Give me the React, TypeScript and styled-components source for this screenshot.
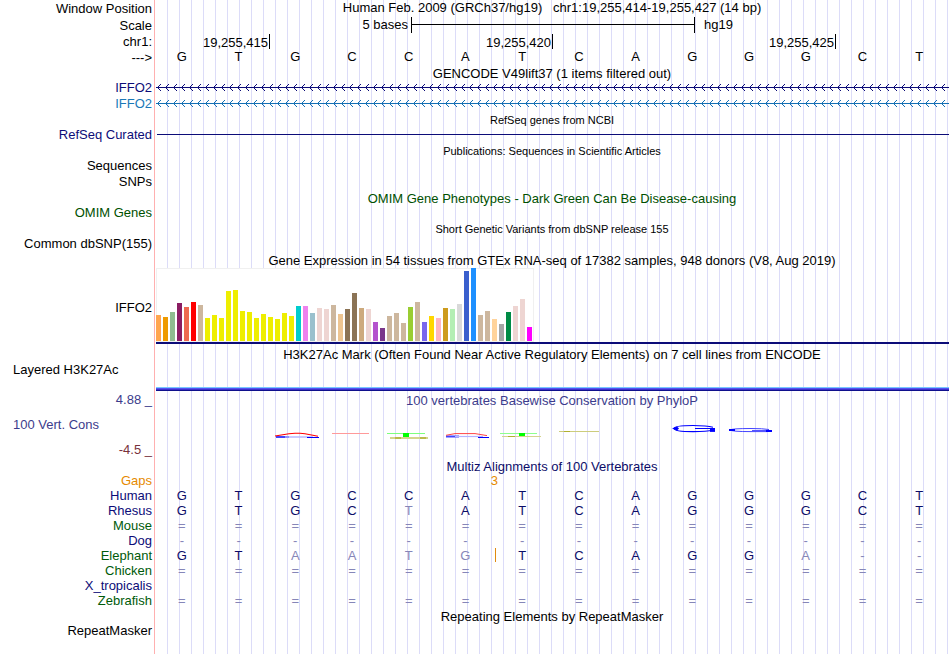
import React from "react";
import styled, { createGlobalStyle } from "styled-components";

const GlobalStyle = createGlobalStyle`
  *, *::before, *::after { box-sizing: border-box; }
  body { margin: 0; background: #fff; }
`;

const LABEL = "155px";

const Page = styled.main`
  display: flex;
  flex-direction: column;
  min-height: 100vh;
  padding-right: 1px;
  color: #000;
  font: 13px/15px "Liberation Sans", Arial, sans-serif;
  background:
    linear-gradient(#ffb0b0 0 0) 154px 0 / 1px 100% no-repeat,
    linear-gradient(#fff 0 0) 0 0 / 156px 100% no-repeat,
    linear-gradient(to right, transparent 11px, #dcdcf8 11px) 156px 0 / 12px 100% repeat-x;
`;

const Row = styled.section<{ $h: number }>`
  display: grid;
  grid-template-columns: ${LABEL} minmax(0, 1fr);
  min-height: ${(p) => p.$h}px;
  line-height: ${(p) => Math.min(p.$h, 16)}px;
`;

const Label = styled.div<{ $color?: string }>`
  padding-right: 3px;
  align-self: center;
  text-align: right;
  white-space: nowrap;
  color: ${(p) => p.$color || "inherit"};
`;

const Title = styled.h2<{ $color?: string; $small?: boolean }>`
  margin: 0 0 -1px;
  align-self: end;
  text-align: center;
  white-space: pre;
  font-weight: 400;
  font-size: ${(p) => (p.$small ? 11 : 13)}px;
  color: ${(p) => p.$color || "inherit"};
`;

const PositionTitle = styled(Title).attrs({ as: "h1" })`
  margin: 0;
  align-self: start;
  line-height: 15px;
`;

const ScaleRuler = styled.div`
  display: grid;
  grid-template-columns: 256fr 284fr 254fr;
  line-height: 15px;
`;

const ScaleText = styled.span<{ $right?: boolean }>`
  padding: 0 3px 0 9px;
  text-align: ${(p) => (p.$right ? "right" : "left")};
`;

const ScaleBar = styled.span`
  height: 16px;
  border: solid #000;
  border-width: 0 1px;
  background: linear-gradient(#000 0 0) 0 7px / 100% 1px no-repeat;
`;

const Ticks = styled.div`
  display: grid;
  grid-template-columns: 115fr 283fr 283fr 113fr;
`;

const Tick = styled.span`
  height: 15px;
  padding-right: 1px;
  border-right: 1px solid #000;
  text-align: right;
  line-height: 17px;
`;

const Bases = styled.div`
  display: grid;
  grid-template-columns: repeat(14, minmax(0, 1fr));
`;

const Base = styled.span`
  padding-right: 3px;
  text-align: center;
  line-height: 14px;
`;

const Track = styled.svg<{ $h: number }>`
  display: block;
  width: 100%;
  height: ${(p) => p.$h}px;
  shape-rendering: crispEdges;
`;

const Solid = styled.div`
  height: 1px;
  margin: 7px 0 0 2px;
  background: #0c0c78;
`;

const ChartLabel = styled(Label)`
  padding-top: 3px;
`;

const ChartCell = styled.div`
  margin-left: 1px;
  border-bottom: 2px solid #0c0c78;
`;

const Chart = styled.svg`
  display: block;
  shape-rendering: crispEdges;
`;

const SideLabel = styled(Label)`
  align-self: start;
  padding-left: 13px;
  text-align: left;
  line-height: 15px;
`;

const Signal = styled.div`
  align-self: end;
  height: 4px;
  margin-left: 1px;
  background: linear-gradient(#78c8ff 0 1px, #5454f0 1px 2px, #4030cc 2px 3px, #10108c 3px);
`;

const ConsLabels = styled.div`
  display: flex;
  flex-direction: column;
  justify-content: space-between;
  padding-top: 9px;
`;

const MinLabel = styled(Label)`
  align-self: end;
`;

const Alignment = styled.table`
  display: block;
`;

const AlignBody = styled.tbody`
  display: block;
`;

const Species = styled.tr`
  display: grid;
  grid-template-columns: ${LABEL} repeat(14, minmax(0, 1fr));
  height: 15px;
  line-height: 15px;
`;

const SpeciesName = styled.th<{ $color: string }>`
  padding: 0 3px 0 0;
  text-align: right;
  font-weight: 400;
  color: ${(p) => p.$color};
`;

const Nucleotide = styled.td<{ $faint: boolean; $insert: boolean }>`
  padding: 0 3px 0 0;
  text-align: center;
  color: ${(p) => (p.$faint ? "#8686b8" : "#0c0c68")};
  background: ${(p) => (p.$insert ? "linear-gradient(#e08a10 0 0) 0 0 / 1px 14px no-repeat" : "none")};
`;

const GapCount = styled.td`
  grid-column: 7 / 9;
  padding: 0 2px 0 0;
  text-align: center;
  color: #e68a00;
`;

const NAVY = "#0c0c78";
const GREEN = "#005000";
const SPECIES_GREEN = "#005a0a";
const SEQUENCE = "GTGCCATCAGGGCT";

const expression: [number, string][] = [
  [26, "#ffa54f"], [24, "#ee9a00"], [29, "#8fbc8f"], [38, "#8b1c62"], [34, "#ee6a50"],
  [39, "#ff0000"], [36, "#cdb79e"], [23, "#eeee00"], [26, "#eeee00"], [23, "#eeee00"],
  [50, "#eeee00"], [51, "#eeee00"], [30, "#eeee00"], [29, "#eeee00"], [23, "#eeee00"],
  [27, "#eeee00"], [24, "#eeee00"], [22, "#eeee00"], [28, "#eeee00"], [25, "#eeee00"],
  [35, "#00cdcd"], [35, "#ee82ee"], [28, "#9ac0cd"], [33, "#eed5d2"], [32, "#eed5d2"],
  [36, "#cdb79e"], [27, "#eec591"], [32, "#8b7355"], [48, "#8b7355"], [33, "#cdaa7d"],
  [32, "#eed5d2"], [19, "#b452cd"], [13, "#7a378b"], [25, "#cdb79e"], [28, "#cdb79e"],
  [18, "#cdb79e"], [34, "#9acd32"], [39, "#cdb79e"], [19, "#7a67ee"], [25, "#ffd700"],
  [23, "#ffb6c1"], [33, "#cd9b1d"], [32, "#b4eeb4"], [37, "#d9d9d9"], [70, "#3a5fcd"],
  [73, "#1e90ff"], [26, "#cdb79e"], [30, "#cdb79e"], [22, "#ffd39b"], [17, "#a6a6a6"],
  [29, "#008b45"], [35, "#eed5d2"], [42, "#eed5d2"], [14, "#ff00ff"],
];

interface AlignedSpecies {
  name: string;
  color: string;
  bases: string;
  faint?: number[];
  insertAt?: number;
}

// `faint` holds the indexes of bases that differ from the human sequence;
// a row without it is drawn faint throughout.
const species: AlignedSpecies[] = [
  { name: "Human", color: NAVY, bases: SEQUENCE, faint: [] },
  { name: "Rhesus", color: NAVY, bases: "GTGCTATCAGGGCT", faint: [4] },
  { name: "Mouse", color: SPECIES_GREEN, bases: "==============" },
  { name: "Dog", color: NAVY, bases: "--------------" },
  { name: "Elephant", color: SPECIES_GREEN, bases: "GTAATGTCAGGA--", faint: [2, 3, 4, 5, 11, 12, 13], insertAt: 6 },
  { name: "Chicken", color: SPECIES_GREEN, bases: "==============" },
  { name: "X_tropicalis", color: NAVY, bases: "              " },
  { name: "Zebrafish", color: SPECIES_GREEN, bases: "==============" },
];

function GeneTrack({ id, color }: { id: string; color: string }) {
  return (
    <Track $h={16} aria-hidden="true">
      <defs>
        <pattern id={id} x="2" y="0" width="8" height="16" patternUnits="userSpaceOnUse">
          <path d="M0 7h1v1H0zM1 6h1v1H1zM1 8h1v1H1zM2 5h1v1H2zM2 9h1v1H2zM3 4h1v1H3zM3 10h1v1H3z" fill={color} />
        </pattern>
      </defs>
      <rect x="1" y="7" width="100%" height="1" fill={color} />
      <rect x="2" y="0" width="100%" height="16" fill={`url(#${id})`} />
    </Track>
  );
}

function ExpressionChart() {
  return (
    <Chart width="378" height="74" role="img" aria-label="Expression by tissue">
      <rect width="378" height="74" fill="#f0f0f0" />
      <rect x="1" y="1" width="376" height="72" fill="#fff" />
      {expression.map(([value, color], i) => (
        <rect key={i} x={i * 7} y={73 - value} width="5" height={value} fill={color} />
      ))}
    </Chart>
  );
}

function ConservationLogo() {
  return (
    <Track $h={50} viewBox="0 0 794 50" preserveAspectRatio="none" aria-hidden="true">
      <g fill="none" shapeRendering="geometricPrecision">
        <path d="M121 29H134" stroke="#44f" strokeWidth="2" />
        <path d="M130 29H158" stroke="#b4b4ff" strokeWidth="1.4" />
        <path d="M152 29.5H164" stroke="#00f" strokeWidth="1" />
        <path d="M120 28L134 25.8L140 25.2H145L150 25.8L163 28.2" stroke="#f00" strokeWidth="1.1" />
        <path d="M177 25.5H214" stroke="#ff9a9a" strokeWidth="1" />
        <path d="M232 25.5H270" stroke="#7dff7d" strokeWidth="1" />
        <path d="M251 25V29" stroke="#0f0" strokeWidth="6" />
        <path d="M235 30H273" stroke="#d4d48e" strokeWidth="2" />
        <path d="M240 30H246M265 30H271" stroke="#baba4a" strokeWidth="2" />
        <path d="M291 28.5H304" stroke="#44f" strokeWidth="2" />
        <path d="M300 28.5H328" stroke="#b4b4ff" strokeWidth="1.2" />
        <path d="M323 29.5H334" stroke="#00f" strokeWidth="1" />
        <path d="M291 27.3L300 25.6H320L332 27.6" stroke="#f44" strokeWidth="1" />
        <path d="M345 25.5H382" stroke="#8dff8d" strokeWidth="1" />
        <path d="M367 25V28" stroke="#0f0" strokeWidth="6" />
        <path d="M347 28.5H386" stroke="#d4d48e" strokeWidth="1" />
        <path d="M353 28.5H360" stroke="#b0b030" strokeWidth="1" />
        <path d="M404 23.5H444" stroke="#cccc7c" strokeWidth="1" />
        <path d="M409 23.5H415" stroke="#b0b030" strokeWidth="1" />
        <path d="M558 19.2Q552 17.5 538 17.5Q519 17.5 519 20.5Q519 23.6 538 23.6Q552 23.6 558 22" stroke="#00f" strokeWidth="1.1" />
        <path d="M517 20.5L522 18.6L524 20.5L522 22.4Z" fill="#00f" />
        <path d="M540 20.5H560" stroke="#00f" strokeWidth="1" />
        <path d="M555 22.2H560" stroke="#00f" strokeWidth="3.4" />
        <path d="M614 21.5Q608 20.5 596 20.5Q576 20.5 576 22Q576 23.6 596 23.6H612" stroke="#44f" strokeWidth="1" />
        <path d="M574 22H580" stroke="#00f" strokeWidth="2" />
        <path d="M597 22.5H612" stroke="#55f" strokeWidth="1" />
        <path d="M611 23H617" stroke="#00f" strokeWidth="2" />
      </g>
    </Track>
  );
}

export default function App() {
  return (
    <>
      <GlobalStyle />
      <Page>
        <Row $h={17}>
          <Label>Window Position</Label>
          <PositionTitle>{"Human Feb. 2009 (GRCh37/hg19)   chr1:19,255,414-19,255,427 (14 bp)"}</PositionTitle>
        </Row>
        <Row $h={17}>
          <Label>Scale</Label>
          <ScaleRuler>
            <ScaleText $right>5 bases</ScaleText>
            <ScaleBar />
            <ScaleText>hg19</ScaleText>
          </ScaleRuler>
        </Row>
        <Row $h={16}>
          <Label>chr1:</Label>
          <Ticks>
            <Tick>19,255,415</Tick>
            <Tick>19,255,420</Tick>
            <Tick>19,255,425</Tick>
          </Ticks>
        </Row>
        <Row $h={16}>
          <Label>---&gt;</Label>
          <Bases>
            {SEQUENCE.split("").map((base, i) => (
              <Base key={i}>{base}</Base>
            ))}
          </Bases>
        </Row>

        <Row $h={14}>
          <span />
          <Title>GENCODE V49lift37 (1 items filtered out)</Title>
        </Row>
        <Row $h={16}>
          <Label $color={NAVY}>IFFO2</Label>
          <GeneTrack id="arrows-navy" color={NAVY} />
        </Row>
        <Row $h={16}>
          <Label $color="#1a78b8">IFFO2</Label>
          <GeneTrack id="arrows-blue" color="#1470b4" />
        </Row>

        <Row $h={15}>
          <span />
          <Title $small>RefSeq genes from NCBI</Title>
        </Row>
        <Row $h={16}>
          <Label $color={NAVY}>RefSeq Curated</Label>
          <Solid />
        </Row>

        <Row $h={15}>
          <span />
          <Title $small>Publications: Sequences in Scientific Articles</Title>
        </Row>
        <Row $h={16}>
          <Label>Sequences</Label>
        </Row>
        <Row $h={16}>
          <Label>SNPs</Label>
        </Row>

        <Row $h={15}>
          <span />
          <Title $color={GREEN}>OMIM Gene Phenotypes - Dark Green Can Be Disease-causing</Title>
        </Row>
        <Row $h={16}>
          <Label $color={GREEN}>OMIM Genes</Label>
        </Row>

        <Row $h={15}>
          <span />
          <Title $small>Short Genetic Variants from dbSNP release 155</Title>
        </Row>
        <Row $h={16}>
          <Label>Common dbSNP(155)</Label>
        </Row>

        <Row $h={16}>
          <span />
          <Title>Gene Expression in 54 tissues from GTEx RNA-seq of 17382 samples, 948 donors (V8, Aug 2019)</Title>
        </Row>
        <Row $h={76}>
          <ChartLabel>IFFO2</ChartLabel>
          <ChartCell>
            <ExpressionChart />
          </ChartCell>
        </Row>

        <Row $h={18}>
          <span />
          <Title>H3K27Ac Mark (Often Found Near Active Regulatory Elements) on 7 cell lines from ENCODE</Title>
        </Row>
        <Row $h={29}>
          <SideLabel>Layered H3K27Ac</SideLabel>
          <Signal />
        </Row>

        <Row $h={17}>
          <Label $color="#3c3c8c">4.88 _</Label>
          <Title $color="#3c3c8c">100 vertebrates Basewise Conservation by PhyloP</Title>
        </Row>
        <Row $h={50}>
          <ConsLabels>
            <SideLabel $color="#3c3c8c">100 Vert. Cons</SideLabel>
            <MinLabel $color="#78323c">-4.5 _</MinLabel>
          </ConsLabels>
          <ConservationLogo />
        </Row>

        <Row $h={15}>
          <span />
          <Title $color="#0c0c68">Multiz Alignments of 100 Vertebrates</Title>
        </Row>
        <Alignment>
          <AlignBody>
            <Species>
              <SpeciesName scope="row" $color="#e68a00">
                Gaps
              </SpeciesName>
              <GapCount>3</GapCount>
            </Species>
            {species.map((s) => (
              <Species key={s.name}>
                <SpeciesName scope="row" $color={s.color}>
                  {s.name}
                </SpeciesName>
                {s.bases.split("").map((base, i) => (
                  <Nucleotide key={i} $faint={s.faint ? s.faint.includes(i) : true} $insert={s.insertAt === i}>
                    {base}
                  </Nucleotide>
                ))}
              </Species>
            ))}
          </AlignBody>
        </Alignment>

        <Row $h={16}>
          <span />
          <Title>Repeating Elements by RepeatMasker</Title>
        </Row>
        <Row $h={14}>
          <Label>RepeatMasker</Label>
        </Row>
      </Page>
    </>
  );
}
